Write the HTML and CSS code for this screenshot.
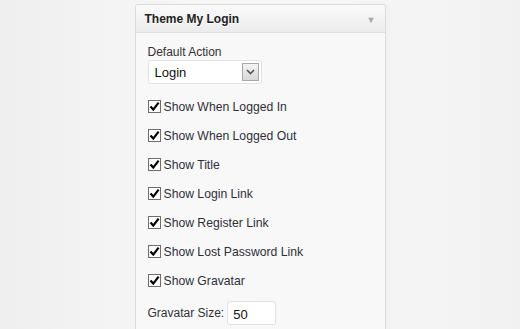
FILE: index.html
```html
<!DOCTYPE html>
<html lang="en">
<head>
  <meta charset="UTF-8">
  <title>Theme My Login</title>
  <link rel="stylesheet" href="styles.css">
</head>
<body>
  <div class="widget">
    <div class="widget-top">
      <h3>Theme My Login</h3>
      <span class="toggle">&#9660;</span>
    </div>

    <div class="widget-inside">
      <label class="field-label">Default Action</label>
      <div class="select">
        <span>Login</span>
        <span class="select-arrow">
          <svg width="9" height="6" viewBox="0 0 9 6"><path d="M1 1 L4.5 4.5 L8 1" fill="none" stroke="#555" stroke-width="1.6"/></svg>
        </span>
      </div>

      <ul class="checks">
        <li><span class="box"><svg width="11" height="11" viewBox="0 0 11 11"><path d="M1.5 5.5 L4.3 8.6 L9.6 1.6" fill="none" stroke="#000" stroke-width="2.2"/></svg></span>Show When Logged In</li>
        <li><span class="box"><svg width="11" height="11" viewBox="0 0 11 11"><path d="M1.5 5.5 L4.3 8.6 L9.6 1.6" fill="none" stroke="#000" stroke-width="2.2"/></svg></span>Show When Logged Out</li>
        <li><span class="box"><svg width="11" height="11" viewBox="0 0 11 11"><path d="M1.5 5.5 L4.3 8.6 L9.6 1.6" fill="none" stroke="#000" stroke-width="2.2"/></svg></span>Show Title</li>
        <li><span class="box"><svg width="11" height="11" viewBox="0 0 11 11"><path d="M1.5 5.5 L4.3 8.6 L9.6 1.6" fill="none" stroke="#000" stroke-width="2.2"/></svg></span>Show Login Link</li>
        <li><span class="box"><svg width="11" height="11" viewBox="0 0 11 11"><path d="M1.5 5.5 L4.3 8.6 L9.6 1.6" fill="none" stroke="#000" stroke-width="2.2"/></svg></span>Show Register Link</li>
        <li><span class="box"><svg width="11" height="11" viewBox="0 0 11 11"><path d="M1.5 5.5 L4.3 8.6 L9.6 1.6" fill="none" stroke="#000" stroke-width="2.2"/></svg></span>Show Lost Password Link</li>
        <li><span class="box"><svg width="11" height="11" viewBox="0 0 11 11"><path d="M1.5 5.5 L4.3 8.6 L9.6 1.6" fill="none" stroke="#000" stroke-width="2.2"/></svg></span>Show Gravatar</li>
      </ul>

      <div class="size-row">
        <label>Gravatar Size:</label>
        <div class="text-input">50</div>
      </div>
    </div>
  </div>
</body>
</html>
```

FILE: styles.css
```css
body {
  margin: 0;
  padding: 0;
  height: 329px;
  overflow: hidden;
  font-family: 'Liberation Sans', Arial, sans-serif;
  background: linear-gradient(90deg, #efefef, #f7f7f7 40%, #f7f7f7 60%, #f1f1f1);
  color: #333;
}

.widget {
  width: 251px;
  margin: 4px auto 0;
  border: 1px solid #dcdcdc;
  border-radius: 3px 3px 0 0;
  background: #f8f8f8;
  height: 340px;
  box-sizing: border-box;
  box-shadow: 4px 0 4px rgba(0, 0, 0, 0.02);
}

.widget-top {
  height: 27px;
  display: flex;
  align-items: center;
  justify-content: space-between;
  padding: 0 9px 0 9px;
  background: linear-gradient(#f9f9f9, #ececec);
  border-bottom: 1px solid #dfdfdf;
  border-radius: 3px 3px 0 0;
}

.widget-top h3 {
  margin: 0;
  font-size: 12px;
  font-weight: 700;
  color: #222;
  text-shadow: 0 1px 0 #fff;
}

.toggle {
  font-size: 9px;
  color: #a9a9a9;
  margin-top: 3px;
}

.widget-inside {
  padding: 12px 12px 0;
}

.field-label {
  display: block;
  font-size: 12px;
  color: #333;
  line-height: 14px;
}

.select {
  margin-top: 1px;
  width: 114px;
  height: 24px;
  box-sizing: border-box;
  background: #fff;
  border: 1px solid #e2e2e2;
  border-radius: 3px;
  display: flex;
  align-items: center;
  justify-content: space-between;
  padding: 0 2px 0 6px;
  font-size: 13px;
  color: #111;
}

.select-arrow {
  width: 15px;
  height: 16px;
  border: 1px solid #a8a8a8;
  background: linear-gradient(#f3f3f3, #d8d8d8);
  display: flex;
  align-items: center;
  justify-content: center;
}

.checks {
  list-style: none;
  margin: 16px 0 0;
  padding: 0;
}

.checks li {
  display: flex;
  align-items: center;
  height: 13px;
  margin-bottom: 16px;
  font-size: 12.2px;
  color: #2f2f3a;
}

.box {
  width: 11px;
  height: 11px;
  border: 1px solid #6e6e6e;
  background: #fff;
  margin-right: 3px;
  display: flex;
  align-items: center;
  justify-content: center;
  flex-shrink: 0;
}

.size-row {
  display: flex;
  align-items: center;
  gap: 3px;
  margin-top: -2px;
  font-size: 12px;
  color: #333;
}

.text-input {
  width: 49px;
  height: 24px;
  box-sizing: border-box;
  background: #fff;
  border: 1px solid #e0e0e0;
  border-radius: 3px;
  padding: 5px 0 0 5px;
  font-size: 13px;
  color: #111;
}
```
